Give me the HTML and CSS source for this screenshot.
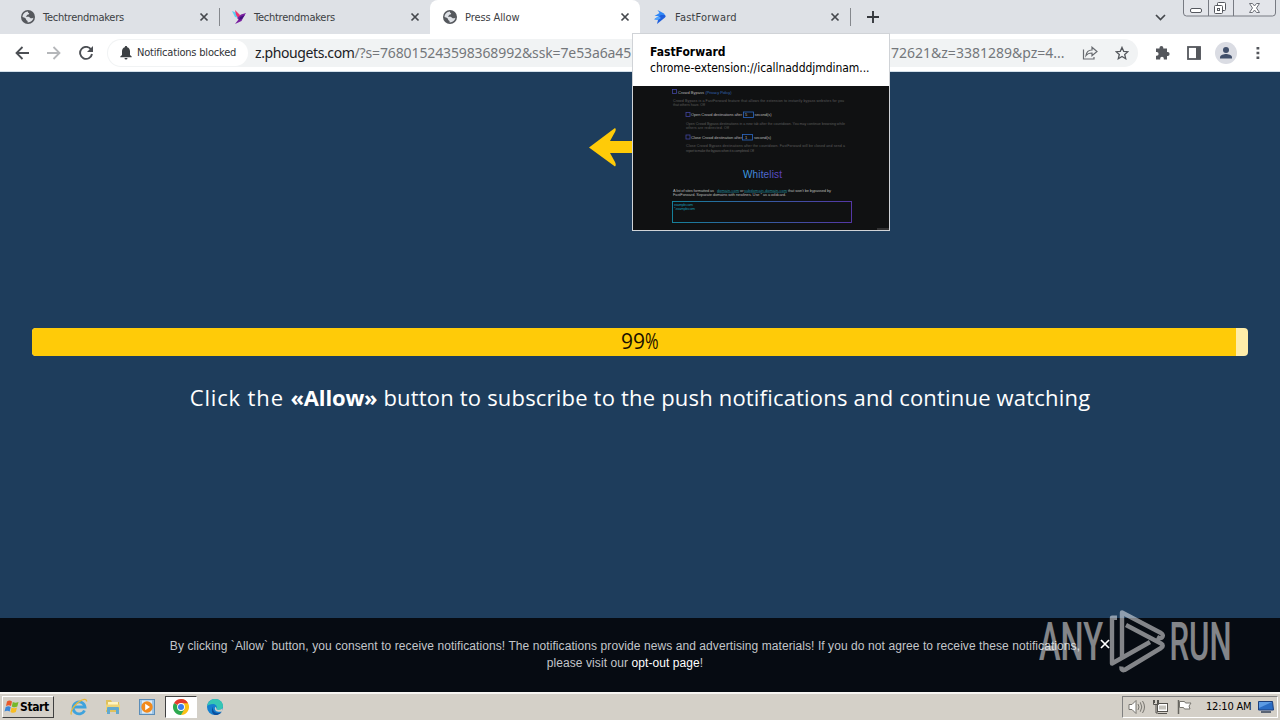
FILE: index.html
```html
<!DOCTYPE html>
<html lang="en">
<head>
    <meta charset="UTF-8">
    <meta name="viewport" content="width=device-width, initial-scale=1.0">
    <title>Press Allow</title>
    <link rel="stylesheet" href="styles.css">
</head>
<body>
    <svg width="0" height="0" class="defs">
        <defs>
            <symbol id="globe" viewBox="0 0 14 14">
                <circle cx="7" cy="7" r="7" fill="#55585d"/>
                <path d="M1.500 7C1.500 4 4 1.600 7 1.500 6.800 2.600 7.400 3 8.200 3.200 8 4.300 7.200 4.700 6.200 4.800 6 5.600 5.600 6 4.800 6.200 5.400 7 6.600 6.600 7.600 6.800 8.600 7 8.800 7.800 9.600 8.200 11 8.600 12.400 8 12.400 7.500 12.200 10.500 9.500 12.600 6.600 12.400 6.800 11.400 6.600 10.800 5.800 10.400 5 10 5.200 9 4.400 8.300 3.600 7.600 2.500 7.500 1.500 7z" fill="#dee1e6"/>
            </symbol>
            <symbol id="close" viewBox="0 0 10 10">
                <path d="M1.500 1.500l7 7M8.500 1.500l-7 7" stroke="#45484d" stroke-width="1.700"/>
            </symbol>
        </defs>
    </svg>

    <div class="tabs">
        <div class="tab">
            <svg class="favicon"><use href="#globe"/></svg>
            <span class="tab-title tight">Techtrendmakers</span>
            <svg class="tab-close"><use href="#close"/></svg>
        </div>
        <div class="tab divided">
            <svg class="favicon" viewBox="0 0 14 14">
                <path d="M0 1l5 2 2 5-4-1z" fill="#5ad1f2"/>
                <path d="M3 0l5 5-1 4-3-4z" fill="#f0356f"/>
                <path d="M14 3L9 4.500 5 8l1.500 1.500L3 14l6.500-3 2-4z" fill="#7a1fa0"/>
                <path d="M13 5l-5 2-1 3 3-1z" fill="#43107c"/>
            </svg>
            <span class="tab-title tight">Techtrendmakers</span>
            <svg class="tab-close"><use href="#close"/></svg>
        </div>
        <div class="tab active">
            <svg class="favicon"><use href="#globe"/></svg>
            <span class="tab-title">Press Allow</span>
            <svg class="tab-close"><use href="#close"/></svg>
        </div>
        <div class="tab last">
            <svg class="favicon" viewBox="0 0 14 14">
                <path d="M4.500 0L11 3.500q1.500 1 0 2L8 7.500 6 6H1.500L6.500 3z" fill="#2f86f6"/>
                <path d="M8 5h4q1.500 1 0 2.500L4 14l1-4-3.500-1L6.500 6z" fill="#1f5fdc"/>
                <path d="M1 9.500L5.500 6 8 8l-3 2z" fill="#4fa4ff"/>
            </svg>
            <span class="tab-title">FastForward</span>
            <svg class="tab-close"><use href="#close"/></svg>
        </div>
        <div class="new-tab">
            <svg width="12" height="12" viewBox="0 0 12 12"><path d="M6 0v12M0 6h12" stroke="#35383d" stroke-width="1.900"/></svg>
        </div>
        <svg class="chevron" width="11" height="7" viewBox="0 0 11 7"><path d="M1 1l4.500 4.500L10 1" fill="none" stroke="#45484d" stroke-width="1.700"/></svg>
        <svg class="window-buttons" width="94" height="18" viewBox="0 0 94 18">
            <path d="M.5 0v13q0 3 3 3h86q3 0 3-3V0M25.500 0v16M50.500 0v16" fill="#e3e5ea" stroke="#777a82"/>
            <rect x="7.500" y="8.500" width="11" height="4" rx="1.500" fill="#fff" stroke="#55585f"/>
            <rect x="34.500" y="2.500" width="8" height="8" rx="1" fill="#fff" stroke="#55585f"/>
            <rect x="31.500" y="5.500" width="8" height="8" rx="1" fill="#fff" stroke="#55585f"/>
            <rect x="34.500" y="8.500" width="2" height="2" fill="none" stroke="#55585f"/>
            <path d="M66.500 3.500h3l2 2.500 2-2.500h3L73.500 8l3 4.500h-3l-2-2.500-2 2.500h-3l3-4.500z" fill="#fff" stroke="#6d7078"/>
        </svg>
    </div>

    <div class="toolbar">
        <div class="nav">
            <svg width="14" height="14" viewBox="0 0 14 14"><path d="M14 7H1.500M7.500 1L1.500 7l6 6" fill="none" stroke="#4c4f54" stroke-width="1.800"/></svg>
            <svg width="14" height="14" viewBox="0 0 14 14"><path d="M0 7h12.500M6.500 1l6 6-6 6" fill="none" stroke="#b5b7ba" stroke-width="1.800"/></svg>
            <svg width="14" height="14" viewBox="0 0 14 14"><path d="M12 3.400A6 6 0 1 0 13 8" fill="none" stroke="#4c4f54" stroke-width="1.900"/><path d="M14 0v6H8z" fill="#4c4f54"/></svg>
        </div>
        <div class="omnibox">
            <div class="chip">
                <svg width="12" height="14" viewBox="0 0 12 14"><path d="M6 0c.8 0 1.200.5 1.200 1.300C9 1.800 10 3.400 10 5.300V9l1.700 1.600V11.300H.3v-.7L2 9V5.300C2 3.400 3 1.800 4.800 1.300 4.800.500 5.200 0 6 0zM4.500 12h3a1.500 1.500 0 0 1-3 0z" fill="#3c4043"/></svg>
                <span>Notifications blocked</span>
            </div>
            <div class="url"><span class="host">z.phougets.com</span><span class="path">/?s=768015243598368992&amp;ssk=7e53a6a45</span></div>
            <div class="url-end">72621&amp;z=3381289&amp;pz=4...</div>
            <svg class="share" width="16" height="14" viewBox="0 0 16 14"><path d="M1.500 3.500v9.500h10.500v-2" fill="none" stroke="#686b70" stroke-width="1.200"/><path d="M4 9.500C4.500 5.500 7 4 10 4V1.200l5 4.300-5 4.200V7C7.500 7 5.500 7.500 4 9.500z" fill="none" stroke="#686b70" stroke-width="1.200"/></svg>
            <svg class="star" width="14" height="14" viewBox="0 0 14 14"><path d="M7 1.400l1.700 3.900 4.200.4-3.200 2.800 1 4.200L7 10.500l-3.700 2.200 1-4.200L1.100 5.700l4.200-.4z" fill="none" stroke="#54575c" stroke-width="1.300"/></svg>
        </div>
        <div class="actions">
            <svg width="15" height="15" viewBox="0 0 15 15"><path d="M1 3.500h3.500V2.800a1.900 1.900 0 0 1 3.800 0v.7H12v3.600h.7a1.900 1.900 0 0 1 0 3.800H12v3.600H8.800v-1a1.800 1.800 0 0 0-3.600 0v1H1v-3.800h.8a1.800 1.800 0 0 0 0-3.600H1z" fill="#54575c"/></svg>
            <svg width="14" height="14" viewBox="0 0 14 14"><rect x="1" y="1" width="12" height="12" fill="#fff" stroke="#54575c" stroke-width="1.800"/><path d="M9 1h4.500v12H9z" fill="#54575c"/></svg>
            <svg width="22" height="22" viewBox="0 0 22 22"><circle cx="11" cy="11" r="11" fill="#dadce3"/><circle cx="11" cy="8" r="3" fill="#41506b"/><path d="M5 16.500v-1.300c0-2 4-3.200 6-3.200s6 1.200 6 3.200v1.300z" fill="#41506b"/></svg>
            <svg width="4" height="14" viewBox="0 0 4 14"><path d="M.5 1h2.800v2.600H.5zM.5 5.700h2.800v2.600H.5zM.5 10.400h2.800V13H.5z" fill="#54575c"/></svg>
        </div>
    </div>

    <div class="page">
        <svg class="arrow" width="60" height="40" viewBox="0 0 60 40"><path d="M0 19.500L26 0q1.500 1 0 4l-5 9h39v12H21l5 9q1.500 3 0 4.500z" fill="#ffcb08"/></svg>
        <div class="progress">
            <div class="progress-fill" style="width: 99%"></div>
            <div class="progress-text">99<span>%</span></div>
        </div>
        <p class="message"><span>Click the </span><b>«Allow»</b> button to subscribe to the push notifications and continue watching</p>
    </div>

    <div class="consent">
        <p>
            By clicking `Allow` button, you consent to receive notifications! The notifications provide news and advertising materials! If you do not agree to receive these notifications,<br>
            please visit our <a>opt-out page</a>!
        </p>
        <svg class="consent-close" width="10" height="10" viewBox="0 0 10 10"><path d="M1 1l8 8M9 1L1 9" stroke="#fff" stroke-width="1.700"/></svg>
    </div>

    <div class="taskbar">
        <div class="start">
            <svg width="15" height="14" viewBox="0 0 15 14">
                <path d="M3 1.500c2-1.500 3.500-1 5 0L7 6C5.500 5 4 5 2 6z" fill="#e8592b"/>
                <path d="M8.800 2c2 1 3.500 1 5.700 0l-1.200 4.600c-2 1-3.500.8-5.500-.2z" fill="#76b82a"/>
                <path d="M1.700 7c2-1 3.400-1 5 0l-1 4.600c-1.700-1-3.200-1-5.200 0z" fill="#3a86d8"/>
                <path d="M7.500 7.500c2 1 3.500 1 5.500 0l-1.200 4.600c-2 1-3.400.8-5.300-.2z" fill="#f8bd22"/>
            </svg>
            <span>Start</span>
        </div>
        <div class="quick">
            <div class="task">
                <svg width="18" height="18" viewBox="0 0 18 18">
                    <path d="M14.500 12.500A6 6 0 1 1 15 9H4" fill="none" stroke="#3fa3dd" stroke-width="2.800"/>
                    <path d="M1.500 16.500C-.5 14 5 5 12 2c3-1.200 5-.5 4.500 1.500" fill="none" stroke="#e6b93c" stroke-width="1.300"/>
                </svg>
            </div>
            <div class="task">
                <svg width="18" height="18" viewBox="0 0 18 18">
                    <path d="M2 2h5l1 2h7v10H2z" fill="#dfc15c"/>
                    <path d="M4 4h10v5H4z" fill="#fff4c0"/>
                    <path d="M2 6.500h14V12H2z" fill="#eed478"/>
                    <path d="M3 16v-6q0-1 1-1h10q1 0 1 1v6h-3v-4H6v4z" fill="#62a9cf"/>
                </svg>
            </div>
            <div class="task">
                <svg width="16" height="16" viewBox="0 0 16 16">
                    <rect x=".5" y=".5" width="15" height="15" fill="#9cc4e6" stroke="#5b8db8"/>
                    <rect x="3" y="1.500" width="10" height="13" fill="#dcebf7"/>
                    <circle cx="8" cy="8" r="5.700" fill="#f28a1c"/>
                    <path d="M6.200 4.800L11 8l-4.800 3.200z" fill="#fff"/>
                </svg>
            </div>
            <div class="task current">
                <svg width="16" height="16" viewBox="0 0 16 16">
                    <path d="M8 8V0A8 8 0 0 1 14.930 4 8 8 0 0 1 8 16L11 9z" fill="#fbc116"/>
                    <path d="M8 8L1.070 4A8 8 0 0 0 8 16L11.500 10z" fill="#2da94f"/>
                    <path d="M8 8L1.070 4A8 8 0 0 1 14.930 4.200H8z" fill="#e33b2e"/>
                    <circle cx="8" cy="8" r="3.900" fill="#fff"/>
                    <circle cx="8" cy="8" r="3" fill="#3b7ded"/>
                </svg>
            </div>
            <div class="task">
                <svg width="16" height="16" viewBox="0 0 16 16">
                    <circle cx="8" cy="8" r="8" fill="#1580cf"/>
                    <path d="M.200 7C1 2.500 4.500 0 8 0c5 0 8 3.500 8 7 0 2.500-2 4-4.500 4-1.500 0-2.500-.6-2-1.400C10.500 7.500 9 5 6 5 3 5 1 6 .2 7z" fill="#35c6b4"/>
                    <path d="M6.500 7C5 9 6 14 11 14c1.500 0 3-.6 4-1.600C13.500 15 10.500 16 8.500 16 5 15.500 3.500 11 6.500 7z" fill="#0c4f9e"/>
                    <path d="M9.500 9.600C9 10.400 10 11 11.500 11c1.700 0 3-.6 4-1.700L15.500 12c-2 1.200-5 1.300-7-.6C7.500 10 7.700 8.500 8.600 7.800z" fill="#d4d0c8"/>
                </svg>
            </div>
        </div>
        <div class="tray">
            <svg width="17" height="16" viewBox="0 0 17 16"><path d="M1 5.500h3l4-4v13l-4-4H1z" fill="#fff" stroke="#77756f"/><path d="M10 5q2 3 0 6M12.300 3.300q3 4.700 0 9.400M14.500 2q4 6 0 12" fill="none" stroke="#77756f"/></svg>
            <svg width="17" height="16" viewBox="0 0 17 16"><rect x="5.500" y="4.500" width="10" height="8" fill="#fff" stroke="#55534e"/><path d="M7 6.500h7v4H7z" fill="#c5c3bc"/><path d="M6 14.500h9M1.500 1v4.500h5V1M4 5.500V14h2M2.500 1v3M5.500 1v3" fill="none" stroke="#55534e"/></svg>
            <svg width="17" height="16" viewBox="0 0 17 16"><path d="M2.500 1v14" stroke="#66645f" stroke-width="1.500"/><path d="M3.500 2.500h5l1 1.500H15l-2 3 1 3H8.500l-1-1.500h-4z" fill="#fff" stroke="#77756f"/></svg>
            <span class="clock">12:10 AM</span>
            <svg width="16" height="14" viewBox="0 0 16 14"><path d="M.5 1.500h14l1 8.500H.5z" fill="#2a6cc4" stroke="#1c3f7c"/><path d="M1 2h13L1 8z" fill="#5c9be4"/><path d="M3 12h10" stroke="#5b6574" stroke-width="2"/></svg>
        </div>
    </div>

    <!-- tab hover card -->
    <div class="hover-card">
        <div class="card-head">
            <div class="card-title">FastForward</div>
            <div class="card-url">chrome-extension://icallnadddjmdinam...</div>
        </div>
        <svg class="card-preview" width="256" height="144" viewBox="0 0 256 144">
            <defs>
                <linearGradient id="accent" x1="0" x2="1"><stop offset="0" stop-color="#168ca8"/><stop offset="1" stop-color="#5b3bb5"/></linearGradient>
                <linearGradient id="heading" x1="0" x2="1"><stop offset="0" stop-color="#38a5e8"/><stop offset="1" stop-color="#6139bd"/></linearGradient>
            </defs>
            <g fill="none" stroke="#4145a0" stroke-width=".8">
                <rect x="39.500" y="3.500" width="4" height="4"/>
                <rect x="53" y="26.500" width="4" height="4"/>
                <rect x="53" y="49" width="4" height="4"/>
                <rect x="110.500" y="26" width="10" height="5.500" stroke="#2c68c4"/>
                <rect x="109.500" y="48.500" width="10" height="5.500" stroke="#2c68c4"/>
            </g>
            <g class="label">
                <text x="45" y="7.500" textLength="26">Crowd Bypass</text>
                <text x="72.500" y="7.500" textLength="26" fill="#3266b4">(Privacy Policy)</text>
                <text x="58" y="30" textLength="51">Open Crowd destinations after</text>
                <text x="121.500" y="30" textLength="17">second(s)</text>
                <text x="58" y="52.500" textLength="51">Close Crowd destination after</text>
                <text x="121" y="52.500" textLength="17">second(s)</text>
                <text x="112" y="30">5</text>
                <text x="112" y="52.500">1</text>
            </g>
            <g class="note">
                <text x="40" y="16" textLength="171">Crowd Bypass is a FastForward feature that allows the extension to instantly bypass websites for you</text>
                <text x="40" y="20" textLength="32">that others have. Off</text>
                <text x="53" y="38.500" textLength="159">Open Crowd Bypass destinations in a new tab after the countdown. You may continue browsing while</text>
                <text x="53" y="42.500" textLength="43">others are redirected. Off</text>
                <text x="53" y="61" textLength="159">Close Crowd Bypass destinations after the countdown. FastForward will be closed and send a</text>
                <text x="53" y="65.500" textLength="68">report to make the bypass when it is completed. Off</text>
            </g>
            <text x="110" y="91.500" class="heading" fill="url(#heading)" textLength="39">Whitelist</text>
            <g class="label">
                <text x="40" y="105.500" textLength="41">A list of sites formatted as</text>
                <text x="84" y="105.500" textLength="22" fill="#1e8799" text-decoration="underline">domain.com</text>
                <text x="107" y="105.500">or</text>
                <text x="111" y="105.500" textLength="43" fill="#1e8799" text-decoration="underline">subdomain.domain.com</text>
                <text x="155" y="105.500" textLength="43">that won't be bypassed by</text>
                <text x="40" y="110" textLength="113">FastForward. Separate domains with newlines. Use * as a wildcard.</text>
            </g>
            <rect x="39.500" y="115.500" width="179" height="21" fill="none" stroke="url(#accent)" stroke-width=".9"/>
            <g class="label">
                <text x="41" y="119.500" textLength="19" fill="#168ca8">example.com</text>
                <text x="41" y="123.500" textLength="21" fill="#168ca8">*.example.com</text>
            </g>
            <path d="M244 143h12" stroke="#555"/>
        </svg>
    </div>

    <svg class="watermark" width="220" height="80" viewBox="0 0 220 80">
        <text x="0" y="50.500" textLength="64" lengthAdjust="spacingAndGlyphs">ANY</text>
        <text x="130.500" y="50.500" textLength="62" lengthAdjust="spacingAndGlyphs">RUN</text>
        <path d="M78 8.700H73V54.500L111 33M83 48V3.500L122 24q3 2 1 4.500-1.500 1.500-5-.5M87 16l35 18.500q3.500 2 0 4.500L85.500 61q-3.500 1-3-3.500" fill="none" stroke="#fff" stroke-width="4.400" stroke-linejoin="round"/>
    </svg>
</body>
</html>
```
FILE: styles.css
```css
body {
    margin: 0;
    width: 1280px;
    height: 720px;
    overflow: hidden;
    position: relative;
    display: flex;
    flex-direction: column;
    background-color: #1e3d5c;
    font-family: "DejaVu Sans Condensed", "DejaVu Sans", sans-serif;
    font-size: 12px;
    color: #3c4043;
}

svg {
    display: block;
    flex: none;
}

.defs {
    position: absolute;
}

/* tab strip */
.tabs {
    display: flex;
    align-items: stretch;
    height: 34px;
    flex: none;
    padding-left: 8px;
    background-color: #dee1e6;
}

.tab {
    display: flex;
    align-items: center;
    width: 211px;
    box-sizing: border-box;
    padding: 0 10px 0 13px;
    white-space: nowrap;
}

.tab.divided {
    background: linear-gradient(#85888d, #85888d) 0 8px / 1px 18px no-repeat;
}

.tab.active,
.tab.last {
    width: 210px;
}

.tab.active {
    background-color: #ffffff;
    border-radius: 8px 8px 0 0;
}

.favicon {
    width: 14px;
    height: 14px;
    margin-right: 8px;
}

.tab-title {
    flex: 1;
    font-size: 11px;
}

.tab.active .tab-title {
    letter-spacing: -0.1px;
}

.tab.last .tab-title {
    letter-spacing: 0.2px;
}

.tab-title.tight {
    letter-spacing: -0.25px;
}

.tab-close {
    width: 10px;
    height: 10px;
}

.new-tab {
    display: flex;
    align-items: center;
    padding-left: 17px;
    background: linear-gradient(#85888d, #85888d) 0 8px / 1px 18px no-repeat;
}

.chevron {
    margin: 14px 17px 0 auto;
}

.window-buttons {
    margin-right: 3px;
}

/* toolbar */
.toolbar {
    display: flex;
    align-items: center;
    height: 38px;
    box-sizing: border-box;
    flex: none;
    padding-left: 15px;
    background-color: #ffffff;
    border-bottom: 1px solid #d3e0ea;
}

.nav {
    display: flex;
    gap: 18px;
    margin-right: 14px;
}

.omnibox {
    display: flex;
    align-items: center;
    width: 1031px;
    height: 28px;
    border-radius: 14px;
    background-color: #f1f3f4;
    white-space: nowrap;
}

.chip {
    display: flex;
    align-items: center;
    gap: 5px;
    width: 140px;
    height: 26px;
    margin-left: 1px;
    padding-left: 12px;
    box-sizing: border-box;
    border-radius: 13px;
    background-color: #ffffff;
    font-size: 11px;
    letter-spacing: -0.2px;
    color: #303236;
}

.url,
.url-end {
    font-family: "Noto Sans", sans-serif;
    font-size: 14px;
    line-height: 20px;
    color: #74777b;
}

.url {
    width: 378px;
    margin-left: 7px;
}

.host {
    color: #202124;
    letter-spacing: -0.4px;
}

.path {
    letter-spacing: -0.12px;
}

.url-end {
    width: 177px;
    margin-left: 258px;
}

.share {
    margin-left: 14px;
}

.star {
    margin-left: 17px;
}

.actions {
    display: flex;
    align-items: center;
    margin-left: 17px;
}

.actions svg:nth-child(2) {
    margin-left: 17px;
}

.actions svg:nth-child(3) {
    margin-left: 14px;
}

.actions svg:nth-child(4) {
    margin-left: 19px;
}

/* page */
.page {
    flex: 1;
    padding: 56px 32px 0;
    color: #ffffff;
    text-align: center;
}

.arrow {
    margin-left: 557px;
}

.progress {
    position: relative;
    height: 28px;
    margin-top: 160px;
    border-radius: 4px;
    overflow: hidden;
    background-color: #ffeda9;
}

.progress-fill {
    height: 100%;
    background-color: #ffcb08;
}

.progress-text {
    position: absolute;
    top: -1px;
    left: 0;
    right: 0;
    font-family: "Open Sans", sans-serif;
    font-size: 21px;
    font-weight: 500;
    line-height: 28px;
    color: #1a1000;
}

.progress-text span {
    display: inline-block;
    width: 14px;
    font-weight: 400;
    transform: scaleX(0.78);
    transform-origin: left;
}

.message {
    margin: 26px 0 0;
    font-family: "Open Sans", sans-serif;
    font-size: 22px;
    line-height: 30px;
    letter-spacing: 0.19px;
    white-space: nowrap;
}

.message span {
    letter-spacing: 0.85px;
}

.message b {
    letter-spacing: -0.15px;
}

/* consent bar */
.consent {
    position: relative;
    height: 74px;
    flex: none;
    background-color: #060b12;
    font-family: "Liberation Sans", Arial, sans-serif;
    font-size: 12px;
    line-height: 17px;
    letter-spacing: 0.08px;
    color: #c3c6ca;
    text-align: center;
}

.consent p {
    width: 930px;
    margin: 20px 0 0 160px;
    white-space: nowrap;
}

.consent a {
    color: #ffffff;
}

.consent-close {
    position: absolute;
    left: 1100px;
    top: 21px;
}

/* taskbar */
.taskbar {
    display: flex;
    align-items: center;
    height: 28px;
    box-sizing: border-box;
    flex: none;
    padding: 0 2px 1px 2px;
    border-top: 2px solid #f6f5f2;
    background-color: #d4d0c8;
    color: #000000;
}

.start {
    display: flex;
    align-items: center;
    gap: 1px;
    width: 52px;
    height: 22px;
    box-sizing: border-box;
    padding-left: 1px;
    border: 1px solid;
    border-color: #ffffff #404040 #404040 #ffffff;
    font-weight: bold;
    letter-spacing: -0.4px;
}

.quick {
    display: flex;
    gap: 2px;
    margin-left: 9px;
}

.task {
    display: flex;
    align-items: center;
    justify-content: center;
    width: 32px;
    height: 22px;
    box-sizing: border-box;
}

.task.current {
    border: 1px solid;
    border-color: #404040 #ffffff #ffffff #404040;
    background-color: #ffffff;
}

.tray {
    display: flex;
    align-items: center;
    width: 156px;
    height: 22px;
    box-sizing: border-box;
    margin-left: auto;
    padding: 0 2px 0 5px;
    gap: 7px;
    border: 1px solid;
    border-color: #808080 #ffffff #ffffff #808080;
}

.clock {
    margin-left: 6px;
    font-size: 11px;
    letter-spacing: -0.2px;
    white-space: nowrap;
}

/* hover card */
.hover-card {
    position: absolute;
    left: 632px;
    top: 33px;
    width: 256px;
    border: 1px solid #d0d3d7;
    background-color: #ffffff;
    color: #000000;
}

.card-head {
    height: 52px;
    box-sizing: border-box;
    padding: 10px 0 0 17px;
    line-height: 16px;
    white-space: nowrap;
}

.card-title {
    font-weight: bold;
}

.card-url {
    letter-spacing: -0.05px;
}

.card-preview {
    background-color: #101112;
    font-family: "Liberation Sans", Arial, sans-serif;
}

.label {
    font-size: 4px;
    fill: #b4b4b4;
}

.note {
    font-size: 3.6px;
    fill: #5c5c5c;
}

.heading {
    font-size: 10px;
}

.watermark {
    position: absolute;
    left: 1039px;
    top: 609px;
    opacity: 0.5;
    font-family: Roboto, sans-serif;
    font-size: 53px;
    font-weight: 500;
    fill: #ffffff;
}
```
